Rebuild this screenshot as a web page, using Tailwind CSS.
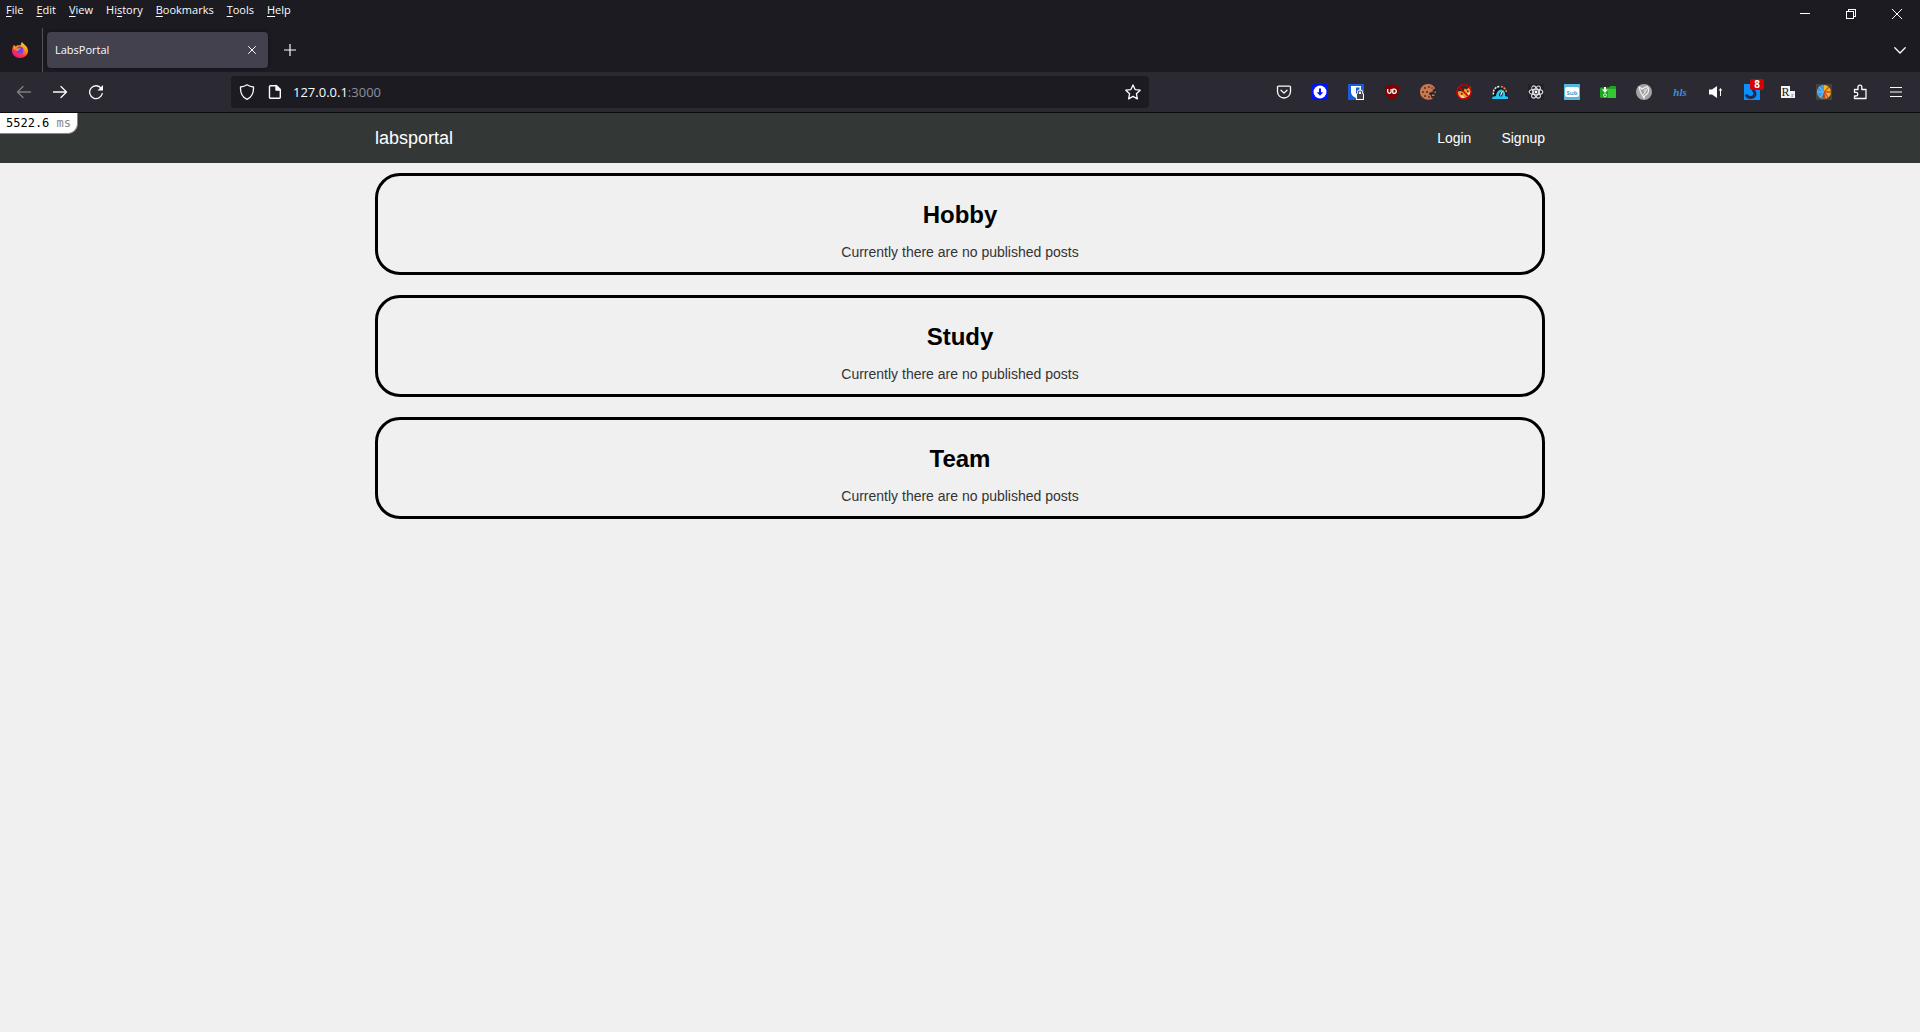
<!DOCTYPE html>
<html lang="en">
<head>
<meta charset="utf-8">
<title>LabsPortal</title>
<script src="https://cdn.jsdelivr.net/npm/@tailwindcss/browser@4"></script>
</head>
<body class="min-h-screen flex flex-col bg-[#f0f0f0] font-['Liberation_Sans',Arial,sans-serif] text-sm">

<!-- Browser chrome -->
<div class="bg-[#1c1b22] text-[#fbfbfe] font-['Open_Sans','Noto_Sans',sans-serif]">
  <div class="flex justify-between h-7">
    <nav class="flex gap-[13px] pl-[6px] h-5 items-center text-[11px] leading-5" aria-label="Menu bar">
      <button><u class="underline-offset-2">F</u>ile</button>
      <button><u class="underline-offset-2">E</u>dit</button>
      <button><u class="underline-offset-2">V</u>iew</button>
      <button>Hi<u class="underline-offset-2">s</u>tory</button>
      <button><u class="underline-offset-2">B</u>ookmarks</button>
      <button><u class="underline-offset-2">T</u>ools</button>
      <button><u class="underline-offset-2">H</u>elp</button>
    </nav>
    <div class="flex">
      <button class="w-[46px] flex items-center justify-center" aria-label="Minimize"><svg width="10" height="10" shape-rendering="crispEdges"><path d="M0 4.5h10" stroke="#fff"/></svg></button>
      <button class="w-[46px] flex items-center justify-center" aria-label="Restore"><svg width="10" height="10" fill="none" stroke="#fff" shape-rendering="crispEdges"><path d="M.5 2.500h7v7h-7zM2.500 2V.5h7v7H8"/></svg></button>
      <button class="w-[46px] flex items-center justify-center" aria-label="Close"><svg width="10" height="10" stroke="#fff"><path d="M0 0l10 10M10 0L0 10"/></svg></button>
    </div>
  </div>

  <div class="flex h-11">
    <div class="w-[42px] pr-0.5 flex items-center justify-center">
      <svg width="16" height="16" viewBox="0 0 16 16">
        <defs>
          <linearGradient id="fx" x1="1" y1="0" x2="0.3" y2="1"><stop offset="0" stop-color="#fff44f"/><stop offset=".4" stop-color="#ff980e"/><stop offset=".7" stop-color="#ff3647"/><stop offset="1" stop-color="#e31587"/></linearGradient>
        </defs>
        <path d="M10 0c.7 1 1.200 1.600 2.300 2.500C14.800 4.500 16 6.500 16 9c0 4-3.600 7-8 7s-8-3-8-7c0-2.500.8-4.500 2-6.200L3 4.500 5.500 3.500C6.500 3 7.500 3 8.500 3.500 9 2 9.300 1 10 0z" fill="url(#fx)"/>
        <path d="M2 2.800L3 4.500l2.500-1c1 .2 1.500.8 2 1.500L4 8 1 7z" fill="#ff8a16"/>
        <circle cx="8" cy="8" r="3.500" fill="#7542e5"/>
        <path d="M4 7.500c1-1.500 3-1 4.500-1.500-.5 1.500-2 1.500-2.500 2.500-.3 1-1.500.5-2-1z" fill="#ff9a1c"/>
      </svg>
    </div>
    <div class="w-px bg-[#52525e]"></div>
    <div class="flex items-center py-1 pl-1">
      <div class="flex items-center justify-between w-[221px] h-9 pl-2 pr-[10px] rounded bg-[#42414d] shadow-[0_0_4px_rgba(0,0,0,0.4)]">
        <span class="text-[11px] leading-4">LabsPortal</span>
        <button class="p-1 pr-0" aria-label="Close tab"><svg class="mr-0.5" width="8" height="8" stroke="#fbfbfe" stroke-linecap="round"><path d="M.5.5l7 7M7.500.5l-7 7"/></svg></button>
      </div>
      <button class="w-11 h-9 flex items-center justify-center" aria-label="New tab"><svg width="12" height="12" stroke="#fbfbfe" stroke-width="1.200"><path d="M6 0v12M0 6h12"/></svg></button>
    </div>
    <button class="ml-auto w-10 flex items-center justify-center" aria-label="List all tabs"><svg width="12" height="7" fill="none" stroke="#fbfbfe" stroke-width="1.300" stroke-linecap="round"><path d="M.8.8L6 6 11.200.8"/></svg></button>
  </div>

  <div class="flex items-center h-10 px-[6px] bg-[#2b2a33]">
    <button class="w-9 h-8 flex items-center justify-center opacity-40" aria-label="Back"><svg width="16" height="16" fill="none" stroke="#fbfbfe" stroke-width="1.300" stroke-linecap="round" stroke-linejoin="round"><path d="M14.500 8h-13M7 2.500L1.500 8 7 13.500"/></svg></button>
    <button class="w-9 h-8 flex items-center justify-center" aria-label="Forward"><svg width="16" height="16" fill="none" stroke="#fbfbfe" stroke-width="1.300" stroke-linecap="round" stroke-linejoin="round"><path d="M1.500 8h13M9 2.500L14.500 8 9 13.500"/></svg></button>
    <button class="w-9 h-8 flex items-center justify-center" aria-label="Reload"><svg width="16" height="16" fill="none" stroke="#fbfbfe" stroke-width="1.300"><path d="M13.300 4.500A6.400 6.400 0 1 0 14.400 9"/><path d="M15 1v5.500H9.500z" fill="#fbfbfe" stroke="none"/></svg></button>
    <div class="flex-[117]"></div>
    <div class="flex-[918] min-w-0">
      <div class="flex items-center h-8 px-2 rounded bg-[#1c1b22]">
        <svg width="16" height="16" fill="none" stroke="#fbfbfe" stroke-width="1.300" stroke-linejoin="round"><path d="M8 .8c2 1.400 4 2 6.500 2.200C14.800 8.500 13 13 8 15.300 3 13 1.200 8.500 1.500 3 4 2.800 6 2.200 8 .8z"/></svg>
        <svg class="ml-3" width="16" height="16" fill="none" stroke="#fbfbfe" stroke-width="1.400" stroke-linejoin="round"><path d="M3.500 1.700H9.500L13.300 5.500V13.300a1 1 0 0 1-1 1h-8.800a1 1 0 0 1-1-1V2.700a1 1 0 0 1 1-1z"/><path d="M9 1.500V6h4.500z" fill="#fbfbfe"/></svg>
        <div class="relative ml-[10px] flex-1 text-[13px] leading-5">
          <input class="w-full bg-transparent outline-none" aria-label="Address">
          <span class="absolute inset-0 pointer-events-none">127.0.0.1<span class="text-[#8f8f9d]">:3000</span></span>
        </div>
        <button aria-label="Bookmark this page"><svg width="16" height="16" fill="none" stroke="#fbfbfe" stroke-width="1.300" stroke-linejoin="round"><path d="M8 .9l2.100 4.700 5.100.6-3.800 3.500 1 5.200L8 12.400l-4.400 2.500 1-5.200L.8 6.200l5.100-.6z"/></svg></button>
      </div>
    </div>
    <div class="flex-[117]"></div>

    <button class="w-9 h-8 flex items-center justify-center" aria-label="Save to Pocket"><svg width="16" height="16" fill="none" stroke="#fbfbfe" stroke-width="1.300" stroke-linecap="round" stroke-linejoin="round"><path d="M2.500 2.200h11a1 1 0 0 1 1 1V7.500a6.500 6.500 0 0 1-13 0V3.200a1 1 0 0 1 1-1z"/><path d="M5 6.200l3 2.900 3-2.900"/></svg></button>
    <button class="w-9 h-8 flex items-center justify-center" aria-label="Download manager"><svg width="16" height="16"><rect width="16" height="16" rx="2" fill="#0012ff"/><circle cx="8" cy="8" r="6.500" fill="#fff"/><path d="M7 4.500h2v3.700h2.200L8 11.700 4.800 8.200H7z" fill="#0012ff"/></svg></button>
    <button class="w-9 h-8 flex items-center justify-center" aria-label="Password manager"><svg width="16" height="16"><rect width="16" height="16" rx="1" fill="#175ddc"/><path d="M3 2h10v6c0 3-2.500 5-5 6-2.500-1-5-3-5-6z" fill="#fff"/><path d="M8 3.500h3.500V8c0 2-1.700 3.200-3.500 4.200z" fill="#175ddc"/><path d="M8 9.500h1V8.500a3 3 0 0 1 6 0v1h1V16H8z" fill="#fff"/><path d="M10.300 10V8.700a1.700 1.700 0 0 1 3.400 0V10" fill="none" stroke="#444" stroke-width="1.200"/><path d="M9 10h6v5H9z" fill="#444"/></svg></button>
    <button class="w-9 h-8 flex items-center justify-center" aria-label="Ad blocker"><svg width="16" height="16"><path d="M8 0c2 1.300 4.500 2 7 2 .2 6-.5 10.500-7 14C1.500 12.500.8 8 1 2c2.500 0 5-.7 7-2z" fill="#800000"/><path d="M3.700 5v2.600a1.700 1.700 0 0 0 3.400 0V5M8.800 5v4.200M8.600 9.300h1.600a2 2 0 0 0 0-4.200H8.600" fill="none" stroke="#fff" stroke-width="1.300"/></svg></button>
    <button class="w-9 h-8 flex items-center justify-center" aria-label="Cookies"><svg width="16" height="16"><path d="M8 0c3.500 0 6.500 1.800 7 4.500L12.500 6l.5 1.500-3.500 1-.5 2 2 1v2l2 1C8 17.500 0 14.500 0 8 0 3.500 3.500 0 8 0z" fill="#c87850"/><g fill="#5b2b18"><circle cx="5" cy="4" r="1"/><circle cx="9" cy="3" r=".9"/><circle cx="3" cy="8" r="1"/><circle cx="7" cy="8" r="1.100"/><circle cx="12" cy="4" r=".8"/><circle cx="5" cy="12" r="1"/><circle cx="9" cy="13" r=".9"/></g><path d="M12 10.500h2.500V12H12zM14.500 7.500H16V9h-1.500z" fill="#c87850"/></svg></button>
    <button class="w-9 h-8 flex items-center justify-center" aria-label="Fox blocker"><svg width="16" height="16"><path d="M1.500 7.500l3-.5 3 1 1-3.500L10.500 5.500 14.500 2.500 15 8l-2 4-4 2-5 .5-2-3z" fill="#f0952a"/><path d="M4 11l3.500.5 1 2.500-3.500 1zM11 9.500l3.500-2L13 12z" fill="#d9d4cc"/><path d="M5 9h1.500v1.500H5zM11 6.500h1.500V8H11z" fill="#402010"/><g fill="none" stroke="#c40000" stroke-width="1.400"><circle cx="8" cy="8" r="7.200"/><path d="M3 3l10 10"/></g></svg></button>
    <button class="w-9 h-8 flex items-center justify-center" aria-label="Page speed"><svg width="16" height="16"><path d="M1 11.500A7 7 0 0 1 15 10.500V12H1z" fill="#111"/><path d="M1.500 10.500A6.500 6.500 0 0 1 8 2.500" fill="none" stroke="#f4f4f4" stroke-width="1.500" stroke-dasharray="2 1"/><path d="M9 2.500A7 7 0 0 1 14.500 9" fill="none" stroke="#ef8055" stroke-width="1.600" stroke-dasharray="2 1"/><path d="M0 15l.5-2L4 12c.5-4 2.500-6.500 5.500-6.500S13.500 9 13 12l3 1v2z" fill="#22c8f5"/><path d="M8.500 12.500a2 2 0 0 1-1-3L11 6l-.5 5a2 2 0 0 1-2 1.500z" fill="#111"/><path d="M8.500 11.500L10.500 7" stroke="#fff" stroke-width="1.200"/></svg></button>
    <button class="w-9 h-8 flex items-center justify-center" aria-label="React tools"><svg width="16" height="16"><rect width="16" height="16" fill="#23222a"/><g fill="none" stroke="#e4e4e8" stroke-width="1.100"><ellipse cx="8" cy="8" rx="6.800" ry="2.700"/><ellipse cx="8" cy="8" rx="6.800" ry="2.700" transform="rotate(60 8 8)"/><ellipse cx="8" cy="8" rx="6.800" ry="2.700" transform="rotate(120 8 8)"/></g><circle cx="8" cy="8" r="1.400" fill="#fff"/></svg></button>
    <button class="w-9 h-8 flex items-center justify-center" aria-label="Subtitles"><svg width="16" height="16"><rect width="16" height="16" fill="#55b8dc"/><rect x="1" y="3" width="14" height="10" rx="2" fill="#fff"/><text x="8" y="10.500" text-anchor="middle" font-size="6" font-weight="700" fill="#38a5cc">Sub</text></svg></button>
    <button class="w-9 h-8 flex items-center justify-center" aria-label="Downloads folder"><svg width="16" height="16"><path d="M0 4.500a1 1 0 0 1 1-1h8l1.500-1.500H15a1 1 0 0 1 1 1V13a1 1 0 0 1-1 1H1a1 1 0 0 1-1-1z" fill="#1fa51f"/><path d="M8 5h8v8a1 1 0 0 1-1 1H8z" fill="#36c736"/><path d="M4 3h2v2.500h2L5 9 2 5.500h2z" fill="#fff"/><circle cx="5" cy="11.300" r="1.500" fill="none" stroke="#c9ffc9"/></svg></button>
    <button class="w-9 h-8 flex items-center justify-center" aria-label="Feather"><svg width="16" height="16"><circle cx="8" cy="8" r="8" fill="#a3a3a3"/><path d="M3 3c1 0 2 1 3 2l5-2.500c2 1 2 5 .5 7L8.500 12 8 14 4.500 8z" fill="none" stroke="#f1f1f1" stroke-width="1.200"/><path d="M12 3.500L7 11M9 5v4" stroke="#e8e8e8"/></svg></button>
    <button class="w-9 h-8 flex items-center justify-center" aria-label="HLS downloader"><svg width="16" height="16"><text x="8" y="12" text-anchor="middle" font-size="11" font-style="italic" font-weight="700" font-family="Liberation Serif, serif" fill="#3b8ede">hls</text></svg></button>
    <button class="w-9 h-8 flex items-center justify-center" aria-label="Volume"><svg width="16" height="16" fill="#fbfbfe"><path d="M1 5.500h3L9 2v12L4 10.500H1zM12.500 4l1.800 2.500h-1.300V12h-1V6.500h-1.300z"/></svg></button>
    <button class="relative w-9 h-8 flex items-center justify-center" aria-label="Script blocker, 8 items"><svg width="16" height="16"><rect width="16" height="16" fill="#0b8fff"/><path d="M2 10.500c2 4.500 8.500 3.500 9-.5.300-2-2-2.500-1.500-5" fill="none" stroke="#1e2c48" stroke-width="3"/></svg><span class="absolute left-4 top-[3px] w-[14px] h-[11px] rounded-xs bg-[#d90000] text-white text-[10px] leading-[11px] font-bold text-center">8</span></button>
    <button class="w-9 h-8 flex items-center justify-center" aria-label="Reader"><svg width="16" height="16"><path d="M1 2h9v12H1zM10 7h5v7h-5z" fill="#f4f4f4"/><text x="5.500" y="12" text-anchor="middle" font-size="12" font-family="Liberation Serif, serif" fill="#222">R</text><text x="12.500" y="13" text-anchor="middle" font-size="7" font-family="Liberation Serif, serif" fill="#555">r</text></svg></button>
    <button class="w-9 h-8 flex items-center justify-center" aria-label="Colour wheel"><svg width="16" height="16"><rect width="16" height="16" fill="#46413c"/><circle cx="8" cy="8" r="7" fill="#f6b71c"/><path d="M8 1a7 7 0 0 0 0 14z" fill="#3c9be8"/><path d="M8 8L3 3M8 8H1M8 8l-4 5.500" stroke="#77c4f5"/><path d="M8 8l5-5M8 8h7M8 8l4 5.500" stroke="#d8482a" stroke-width="1.300"/><path d="M8 8l-2 6.500L10 15z" fill="#b04a2e"/></svg></button>
    <button class="w-9 h-8 flex items-center justify-center" aria-label="Extensions"><svg width="16" height="16" fill="none" stroke="#fbfbfe" stroke-width="1.300" stroke-linejoin="round"><path d="M2.500 5.500H6V3a1.900 1.900 0 0 1 3.800 0v2.500H14V14.500H2.500V12H4a1.800 1.800 0 0 0 0-3.600H2.500z"/></svg></button>
    <button class="w-9 h-8 flex items-center justify-center" aria-label="Application menu"><svg width="16" height="16" stroke="#fbfbfe" stroke-width="1.200"><path d="M2 3.500h12M2 8h12M2 12.500h12"/></svg></button>
  </div>
  <div class="h-px bg-[#0c0c0d]"></div>
</div>

<!-- LabsPortal page -->
<div class="relative flex-1">
  <div class="absolute left-0 top-0 px-[6px] h-[21px] rounded-br-[10px] border-r border-b border-[#888] bg-white font-['DejaVu_Sans_Mono',monospace] text-xs leading-5 text-black">5522.6 <span class="text-[#888]">ms</span></div>

  <header class="h-[50px] bg-[#333837]">
    <div class="mx-auto max-w-[1170px] h-full flex items-center justify-between text-white">
      <a href="#" class="text-lg leading-5">labsportal</a>
      <nav class="flex gap-[30px] leading-5">
        <a href="#">Login</a>
        <a href="#">Signup</a>
      </nav>
    </div>
  </header>

  <main class="mx-auto max-w-[1170px] pt-[10px] flex flex-col gap-5 text-center">
    <section class="border-3 border-black rounded-[25px] pt-[23px] pb-[10px]">
      <h2 class="text-2xl leading-8 font-bold text-black">Hobby</h2>
      <p class="mt-[11px] leading-5 text-[#333]">Currently there are no published posts</p>
    </section>
    <section class="border-3 border-black rounded-[25px] pt-[23px] pb-[10px]">
      <h2 class="text-2xl leading-8 font-bold text-black">Study</h2>
      <p class="mt-[11px] leading-5 text-[#333]">Currently there are no published posts</p>
    </section>
    <section class="border-3 border-black rounded-[25px] pt-[23px] pb-[10px]">
      <h2 class="text-2xl leading-8 font-bold text-black">Team</h2>
      <p class="mt-[11px] leading-5 text-[#333]">Currently there are no published posts</p>
    </section>
  </main>
</div>
</body>
</html>
